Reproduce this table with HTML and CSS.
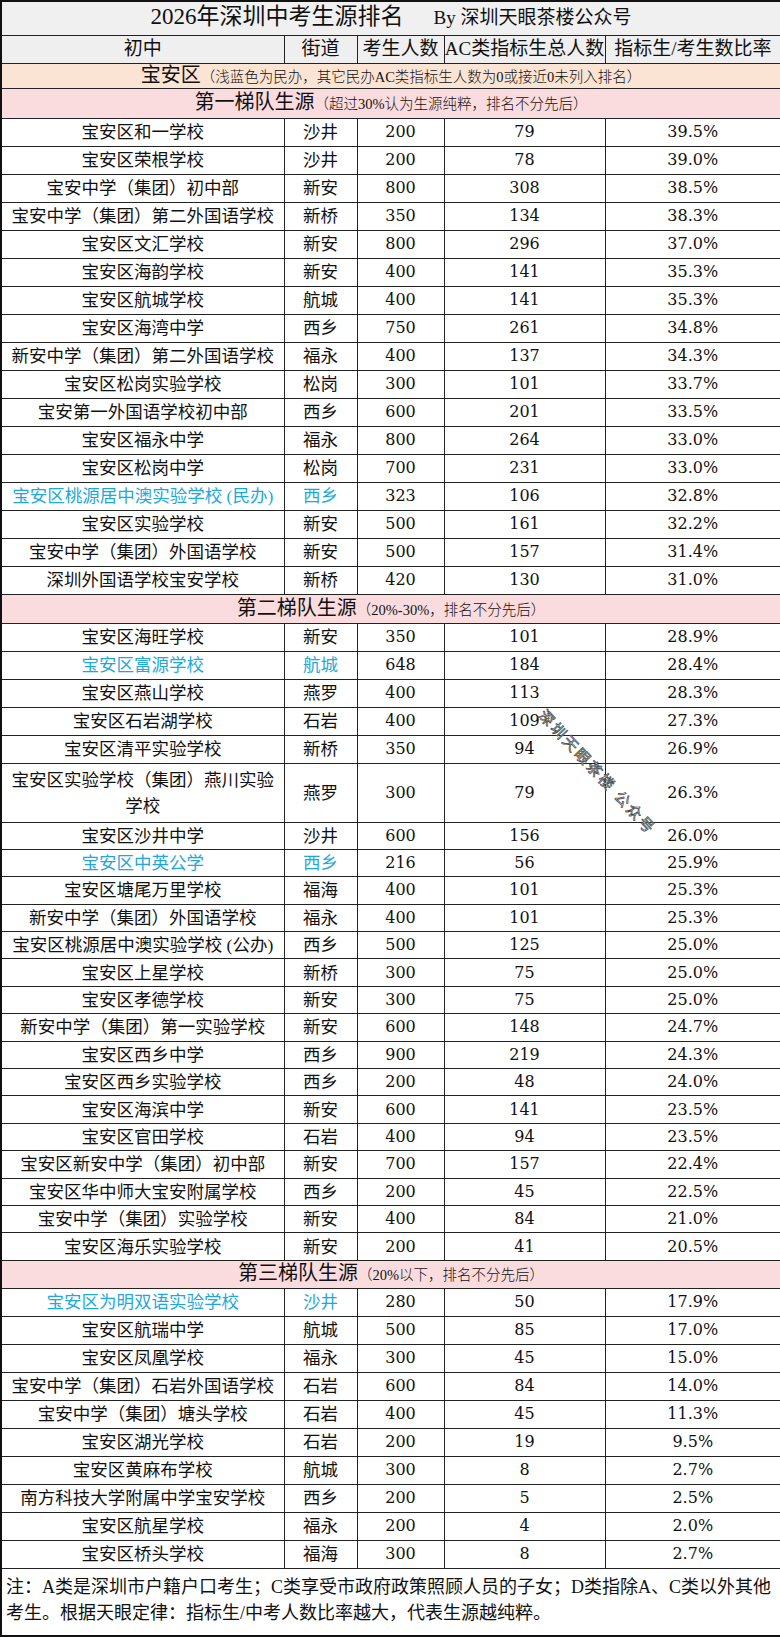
FILE: index.html
```html
<!DOCTYPE html>
<html lang="zh-CN">
<head>
<meta charset="utf-8">
<title>2026年深圳中考生源排名</title>
<link rel="stylesheet" href="styles.css">
</head>
<body>
<div class="page">
<table class="sheet">
<colgroup>
<col class="c-name"><col class="c-street"><col class="c-total"><col class="c-ac"><col class="c-rate">
</colgroup>
<thead>
<tr class="title-row"><td colspan="5"><span class="title-main">2026年深圳中考生源排名</span><span class="title-by">By 深圳天眼茶楼公众号</span></td></tr>
<tr class="head-row"><th>初中</th><th>街道</th><th>考生人数</th><th>AC类指标生总人数</th><th>指标生/考生数比率</th></tr>
<tr class="district-row"><td colspan="5"><span class="sec-main">宝安区</span><span class="sec-note">（浅蓝色为民办，其它民办AC类指标生人数为0或接近0未列入排名）</span></td></tr>
</thead>
<tbody class="tier t1">
<tr class="tier-row"><td colspan="5"><span class="sec-main">第一梯队生源</span><span class="sec-note">（超过30%认为生源纯粹，排名不分先后）</span></td></tr>
<tr><td class="name">宝安区和一学校</td><td class="street">沙井</td><td class="num">200</td><td class="num">79</td><td class="num">39.5%</td></tr>
<tr><td class="name">宝安区荣根学校</td><td class="street">沙井</td><td class="num">200</td><td class="num">78</td><td class="num">39.0%</td></tr>
<tr><td class="name">宝安中学（集团）初中部</td><td class="street">新安</td><td class="num">800</td><td class="num">308</td><td class="num">38.5%</td></tr>
<tr><td class="name">宝安中学（集团）第二外国语学校</td><td class="street">新桥</td><td class="num">350</td><td class="num">134</td><td class="num">38.3%</td></tr>
<tr><td class="name">宝安区文汇学校</td><td class="street">新安</td><td class="num">800</td><td class="num">296</td><td class="num">37.0%</td></tr>
<tr><td class="name">宝安区海韵学校</td><td class="street">新安</td><td class="num">400</td><td class="num">141</td><td class="num">35.3%</td></tr>
<tr><td class="name">宝安区航城学校</td><td class="street">航城</td><td class="num">400</td><td class="num">141</td><td class="num">35.3%</td></tr>
<tr><td class="name">宝安区海湾中学</td><td class="street">西乡</td><td class="num">750</td><td class="num">261</td><td class="num">34.8%</td></tr>
<tr><td class="name">新安中学（集团）第二外国语学校</td><td class="street">福永</td><td class="num">400</td><td class="num">137</td><td class="num">34.3%</td></tr>
<tr><td class="name">宝安区松岗实验学校</td><td class="street">松岗</td><td class="num">300</td><td class="num">101</td><td class="num">33.7%</td></tr>
<tr><td class="name">宝安第一外国语学校初中部</td><td class="street">西乡</td><td class="num">600</td><td class="num">201</td><td class="num">33.5%</td></tr>
<tr><td class="name">宝安区福永中学</td><td class="street">福永</td><td class="num">800</td><td class="num">264</td><td class="num">33.0%</td></tr>
<tr><td class="name">宝安区松岗中学</td><td class="street">松岗</td><td class="num">700</td><td class="num">231</td><td class="num">33.0%</td></tr>
<tr class="private"><td class="name">宝安区桃源居中澳实验学校 (民办)</td><td class="street">西乡</td><td class="num">323</td><td class="num">106</td><td class="num">32.8%</td></tr>
<tr><td class="name">宝安区实验学校</td><td class="street">新安</td><td class="num">500</td><td class="num">161</td><td class="num">32.2%</td></tr>
<tr><td class="name">宝安中学（集团）外国语学校</td><td class="street">新安</td><td class="num">500</td><td class="num">157</td><td class="num">31.4%</td></tr>
<tr><td class="name">深圳外国语学校宝安学校</td><td class="street">新桥</td><td class="num">420</td><td class="num">130</td><td class="num">31.0%</td></tr>
</tbody>
<tbody class="tier t2">
<tr class="tier-row"><td colspan="5"><span class="sec-main">第二梯队生源</span><span class="sec-note">（20%-30%，排名不分先后）</span></td></tr>
<tr class="lead"><td class="name">宝安区海旺学校</td><td class="street">新安</td><td class="num">350</td><td class="num">101</td><td class="num">28.9%</td></tr>
<tr class="lead private"><td class="name">宝安区富源学校</td><td class="street">航城</td><td class="num">648</td><td class="num">184</td><td class="num">28.4%</td></tr>
<tr class="lead"><td class="name">宝安区燕山学校</td><td class="street">燕罗</td><td class="num">400</td><td class="num">113</td><td class="num">28.3%</td></tr>
<tr class="lead"><td class="name">宝安区石岩湖学校</td><td class="street">石岩</td><td class="num">400</td><td class="num">109</td><td class="num">27.3%</td></tr>
<tr class="lead"><td class="name">宝安区清平实验学校</td><td class="street">新桥</td><td class="num">350</td><td class="num">94</td><td class="num">26.9%</td></tr>
<tr class="double"><td class="name">宝安区实验学校（集团）燕川实验学校</td><td class="street">燕罗</td><td class="num">300</td><td class="num">79</td><td class="num">26.3%</td></tr>
<tr><td class="name">宝安区沙井中学</td><td class="street">沙井</td><td class="num">600</td><td class="num">156</td><td class="num">26.0%</td></tr>
<tr class="private"><td class="name">宝安区中英公学</td><td class="street">西乡</td><td class="num">216</td><td class="num">56</td><td class="num">25.9%</td></tr>
<tr><td class="name">宝安区塘尾万里学校</td><td class="street">福海</td><td class="num">400</td><td class="num">101</td><td class="num">25.3%</td></tr>
<tr><td class="name">新安中学（集团）外国语学校</td><td class="street">福永</td><td class="num">400</td><td class="num">101</td><td class="num">25.3%</td></tr>
<tr><td class="name">宝安区桃源居中澳实验学校 (公办)</td><td class="street">西乡</td><td class="num">500</td><td class="num">125</td><td class="num">25.0%</td></tr>
<tr><td class="name">宝安区上星学校</td><td class="street">新桥</td><td class="num">300</td><td class="num">75</td><td class="num">25.0%</td></tr>
<tr><td class="name">宝安区孝德学校</td><td class="street">新安</td><td class="num">300</td><td class="num">75</td><td class="num">25.0%</td></tr>
<tr><td class="name">新安中学（集团）第一实验学校</td><td class="street">新安</td><td class="num">600</td><td class="num">148</td><td class="num">24.7%</td></tr>
<tr><td class="name">宝安区西乡中学</td><td class="street">西乡</td><td class="num">900</td><td class="num">219</td><td class="num">24.3%</td></tr>
<tr><td class="name">宝安区西乡实验学校</td><td class="street">西乡</td><td class="num">200</td><td class="num">48</td><td class="num">24.0%</td></tr>
<tr><td class="name">宝安区海滨中学</td><td class="street">新安</td><td class="num">600</td><td class="num">141</td><td class="num">23.5%</td></tr>
<tr><td class="name">宝安区官田学校</td><td class="street">石岩</td><td class="num">400</td><td class="num">94</td><td class="num">23.5%</td></tr>
<tr><td class="name">宝安区新安中学（集团）初中部</td><td class="street">新安</td><td class="num">700</td><td class="num">157</td><td class="num">22.4%</td></tr>
<tr><td class="name">宝安区华中师大宝安附属学校</td><td class="street">西乡</td><td class="num">200</td><td class="num">45</td><td class="num">22.5%</td></tr>
<tr><td class="name">宝安中学（集团）实验学校</td><td class="street">新安</td><td class="num">400</td><td class="num">84</td><td class="num">21.0%</td></tr>
<tr><td class="name">宝安区海乐实验学校</td><td class="street">新安</td><td class="num">200</td><td class="num">41</td><td class="num">20.5%</td></tr>
</tbody>
<tbody class="tier t3">
<tr class="tier-row"><td colspan="5"><span class="sec-main">第三梯队生源</span><span class="sec-note">（20%以下，排名不分先后）</span></td></tr>
<tr class="private"><td class="name">宝安区为明双语实验学校</td><td class="street">沙井</td><td class="num">280</td><td class="num">50</td><td class="num">17.9%</td></tr>
<tr><td class="name">宝安区航瑞中学</td><td class="street">航城</td><td class="num">500</td><td class="num">85</td><td class="num">17.0%</td></tr>
<tr><td class="name">宝安区凤凰学校</td><td class="street">福永</td><td class="num">300</td><td class="num">45</td><td class="num">15.0%</td></tr>
<tr><td class="name">宝安中学（集团）石岩外国语学校</td><td class="street">石岩</td><td class="num">600</td><td class="num">84</td><td class="num">14.0%</td></tr>
<tr><td class="name">宝安中学（集团）塘头学校</td><td class="street">石岩</td><td class="num">400</td><td class="num">45</td><td class="num">11.3%</td></tr>
<tr><td class="name">宝安区湖光学校</td><td class="street">石岩</td><td class="num">200</td><td class="num">19</td><td class="num">9.5%</td></tr>
<tr><td class="name">宝安区黄麻布学校</td><td class="street">航城</td><td class="num">300</td><td class="num">8</td><td class="num">2.7%</td></tr>
<tr><td class="name">南方科技大学附属中学宝安学校</td><td class="street">西乡</td><td class="num">200</td><td class="num">5</td><td class="num">2.5%</td></tr>
<tr><td class="name">宝安区航星学校</td><td class="street">福永</td><td class="num">200</td><td class="num">4</td><td class="num">2.0%</td></tr>
<tr><td class="name">宝安区桥头学校</td><td class="street">福海</td><td class="num">300</td><td class="num">8</td><td class="num">2.7%</td></tr>
</tbody>
<tfoot>
<tr class="note-row"><td colspan="5"><span class="note-line">注：A类是深圳市户籍户口考生；C类享受市政府政策照顾人员的子女；D类指除A、C类以外其他</span><span class="note-line">考生。根据天眼定律：指标生/中考人数比率越大，代表生源越纯粹。</span></td></tr>
</tfoot>
</table>
<span class="watermark">深圳天眼茶楼 公众号</span>
</div>
</body>
</html>
```
FILE: styles.css
```css
body {
  margin: 0;
  background: #ffffff;
}

.page {
  position: relative;
  width: 780px;
}

.sheet {
  width: 780px;
  border-collapse: collapse;
  table-layout: fixed;
  border: 2px solid #111;
  font-family: "Liberation Serif", "Noto Sans CJK SC", serif;
  color: #111;
}

.c-name { width: 283px; }
.c-street { width: 73px; }
.c-total { width: 87px; }
.c-ac { width: 161px; }
.c-rate { width: 176px; }

.sheet td,
.sheet th {
  border: 1px solid #222;
  padding: 0;
  text-align: center;
  vertical-align: middle;
  font-weight: 400;
  white-space: nowrap;
  line-height: 20px;
}

.title-row { height: 34px; }
.title-row td { background: #f0f0f0; }
.title-main { font-size: 23px; }
.title-by { font-size: 19px; margin-left: 30px; }

.head-row { height: 28px; }
.head-row th {
  background: #efefef;
  font-size: 19px;
}

.district-row { height: 25px; }
.district-row td { background: #fce4d5; }

.tier-row td { background: #fadcdf; }
.t1 .tier-row { height: 30px; }
.t2 .tier-row { height: 29px; }
.t3 .tier-row { height: 28px; }

.sec-main { font-size: 20px; }
.sec-note { font-size: 14.5px; font-weight: 300; }

.tier tr { height: 28px; }
.t2 tr { height: 27.4px; }
.t2 tr.lead { height: 28px; }
.t2 tr.double { height: 59px; }
.sheet .t2 tr.double .name { white-space: normal; line-height: 26px; padding: 0 4px; }

.name,
.street {
  font-size: 17.5px;
}

.num {
  font-family: "DejaVu Serif", "Liberation Serif", serif;
  font-size: 16px;
}

.private .name,
.private .street {
  color: #1fa8dc;
}

.note-row { height: 68px; }
.sheet .note-row td {
  text-align: left;
  font-size: 18px;
  line-height: 26px;
  padding: 0 0 4px 4px;
}

.note-line {
  display: block;
  white-space: nowrap;
}

.watermark {
  position: absolute;
  left: 542px;
  top: 704px;
  font-family: "Noto Sans CJK SC", sans-serif;
  font-size: 15px;
  line-height: 16px;
  letter-spacing: 2.5px;
  color: #ffffff;
  -webkit-text-stroke: 0.7px #444;
  transform-origin: 0 50%;
  transform: rotate(47deg);
  white-space: nowrap;
}
```
